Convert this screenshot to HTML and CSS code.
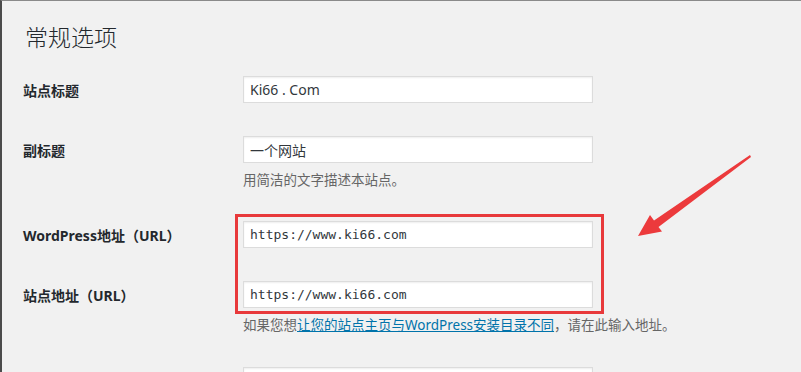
FILE: index.html
```html
<!DOCTYPE html>
<html lang="zh-CN">

<head>
  <meta charset="UTF-8">
  <meta name="viewport" content="width=device-width, initial-scale=1">
  <title>常规选项</title>
  <link rel="stylesheet" href="styles.css">
</head>

<body>
  <div class="wrap">
    <h1>常规选项</h1>

    <div class="form">
      <!-- 站点标题 -->
      <div class="row">
        <label class="label" for="blogname">站点标题</label>
        <div class="field">
          <input type="text" id="blogname" class="text" value="Ki66 . Com">
        </div>
      </div>

      <!-- 副标题 -->
      <div class="row">
        <label class="label" for="blogdesc">副标题</label>
        <div class="field">
          <input type="text" id="blogdesc" class="text" value="一个网站">
          <p class="description">用简洁的文字描述本站点。</p>
        </div>
      </div>

      <div class="highlight">
        <div class="row">
          <label class="label" for="siteurl">WordPress地址（URL）</label>
          <div class="field">
            <input type="url" id="siteurl" class="text code" value="https://www.ki66.com">
          </div>
        </div>

        <div class="row">
          <label class="label" for="home">站点地址（URL）</label>
          <div class="field">
            <input type="url" id="home" class="text code" value="https://www.ki66.com">
            <p class="description">如果您想<a href="#">让您的站点主页与WordPress安装目录不同</a>，请在此输入地址。</p>
          </div>
        </div>
      </div>

      <!-- 下一行只露出输入框的顶部 -->
      <div class="row">
        <span class="label"></span>
        <div class="field">
          <input type="email" id="email" class="text">
        </div>
      </div>
    </div>

    <!-- 标注框和箭头 -->
    <div class="mark-box"></div>
    <svg class="mark-arrow" width="122" height="90" viewBox="0 0 122 90">
      <polygon points="116,2 117,4 24.5,74 28,78.5 4,83 16,62 20,67.5" fill="#ec3a3c" />
    </svg>
  </div>
</body>

</html>
```

FILE: styles.css
```css
* {
  margin: 0;
  padding: 0;
  box-sizing: border-box;
}

body {
  font-family: 'Noto Sans', 'Noto Sans CJK SC', sans-serif;
  background: #f1f1f1;
  color: #23282d;
  font-size: 13px;
  overflow: hidden;
}

.wrap {
  position: relative;
  height: 372px;
  overflow: hidden;
  border-left: 2px solid #4b4b4b;
  border-top: 1px solid #8a8a8a;
  padding: 21px 0 0 21px;
}

h1 {
  font-family: 'Noto Sans CJK SC', sans-serif;
  font-size: 23px;
  font-weight: 300;
  line-height: 29px;
  color: #23282d;
  padding-left: 2px;
}

.form {
  display: flex;
  flex-direction: column;
  gap: 33px;
  margin-top: 25px;
}

.highlight {
  display: flex;
  flex-direction: column;
  gap: 33px;
}

.row {
  display: grid;
  grid-template-columns: 220px 1fr;
  align-items: start;
}

.label {
  font-family: 'Noto Sans', 'Noto Sans CJK SC', sans-serif;
  font-size: 14px;
  font-weight: 700;
  line-height: 20px;
  padding-top: 5px;
  color: #23282d;
}

.text {
  display: block;
  width: 350px;
  height: 27px;
  padding: 0 6px;
  font-family: 'Noto Sans', 'Noto Sans CJK SC', sans-serif;
  font-size: 14px;
  color: #32373c;
  background: #fff;
  border: 1px solid #dcdcdc;
  box-shadow: inset 0 1px 2px rgba(0, 0, 0, 0.07);
  outline: none;
}

.text.code {
  font-family: 'DejaVu Sans Mono', 'Liberation Mono', monospace;
  font-size: 13px;
}

.description {
  margin-top: 6px;
  font-family: 'Noto Sans CJK SC', sans-serif;
  font-size: 13.5px;
  line-height: 18px;
  color: #666;
  white-space: nowrap;
}

.row:nth-child(2) .description {
  margin-top: 7px;
}

.description a {
  font-family: 'Noto Sans', 'Noto Sans CJK SC', sans-serif;
  color: #0073aa;
  text-decoration: underline;
}

.mark-box {
  position: absolute;
  left: 233px;
  top: 213px;
  width: 369px;
  height: 100px;
  border: 3px solid #e8393b;
}

.mark-arrow {
  position: absolute;
  left: 632px;
  top: 152px;
}
```
